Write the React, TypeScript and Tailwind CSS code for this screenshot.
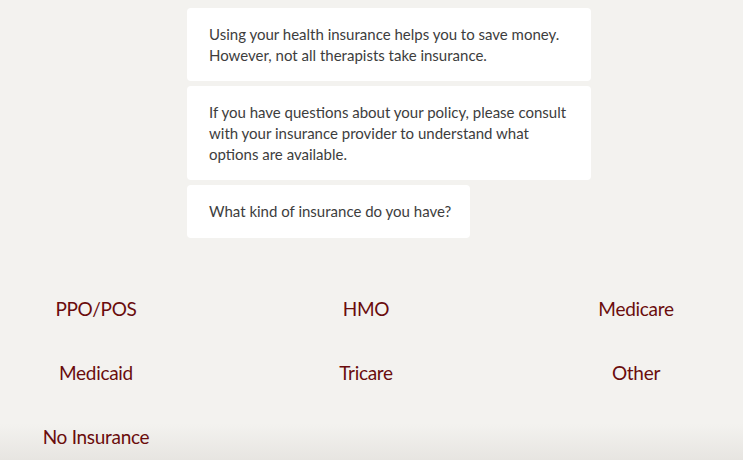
import React from "react";

const bubbles = [
  ["Using your health insurance helps you to save money.", "However, not all therapists take insurance."],
  ["If you have questions about your policy, please consult", "with your insurance provider to understand what", "options are available."],
];

const options = ["PPO/POS", "HMO", "Medicare", "Medicaid", "Tricare", "Other", "No Insurance"];

export default function App() {
  return (
    <div
      className="h-[460px] w-[743px] overflow-hidden bg-[linear-gradient(to_bottom,#f3f2ef_424px,#e7e5e1_460px)]"
      style={{ fontFamily: "Lato, 'Open Sans', sans-serif" }}
    >
      <div className="flex flex-col items-start gap-[5px] pl-[187px] pt-[8px]">
        {bubbles.map((lines, i) => (
          <div key={i} className="w-[404px] rounded-[4px] bg-white pl-[22px] pr-3 pt-[16px] pb-[15px] text-[15px] leading-[21px] text-[#3d3d3d]">
            {lines.map((l, j) => (
              <div key={j}>{l}</div>
            ))}
          </div>
        ))}
        <div className="w-[283px] rounded-[4px] bg-white pl-[22px] pr-3 pt-[16px] pb-[16px] text-[15px] leading-[21px] text-[#3d3d3d]">
          What kind of insurance do you have?
        </div>
      </div>
      <div className="mt-[59px] grid grid-cols-[192px_192px_192px] gap-x-[78px] gap-y-[40px]">
        {options.map((o) => (
          <button key={o} className="h-[24px] text-center text-[19px] leading-[24px] font-normal tracking-[-0.3px] text-[#6a0c0c]">
            {o}
          </button>
        ))}
      </div>
    </div>
  );
}
